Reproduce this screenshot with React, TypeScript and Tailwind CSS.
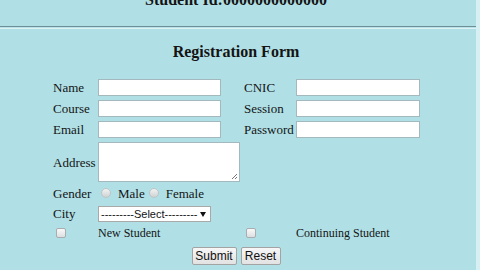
import React from "react";

const serif = { fontFamily: '"Liberation Serif", "Times New Roman", serif' };
const sans = { fontFamily: '"Liberation Sans", Arial, sans-serif' };

function TextBox({ w = "w-[123px]" }: { w?: string }) {
  return <div className={`${w} h-[17px] bg-white border border-[#a3b9be]`} />;
}

function Radio() {
  return (
    <span className="inline-block w-[10px] h-[10px] rounded-full border border-[#bfc5c7] bg-gradient-to-b from-[#f2f2f2] to-[#cfd3d4]" />
  );
}

function Check() {
  return (
    <span className="inline-block w-[10px] h-[10px] rounded-[2px] border border-[#a9adb0] bg-gradient-to-b from-[#fafafa] to-[#dcdedf]" />
  );
}

function Btn({ label, w }: { label: string; w: string }) {
  return (
    <button
      className={`${w} h-[18px] rounded-[2px] border border-[#a3a3a3] bg-gradient-to-b from-[#f7f7f7] to-[#e2e2e2] text-[12px] leading-[16px] text-[#111]`}
      style={sans}
    >
      {label}
    </button>
  );
}

export default function App() {
  return (
    <div className="w-[480px] h-[270px] overflow-hidden bg-[#b0e0e6] flex text-[#141414]" style={serif}>
      <div className="w-[476px] flex flex-col">
        <div className="pr-[4px] -mt-[10px] text-center text-[16px] leading-[20px] font-bold">
          Student Id:0000000000000
        </div>
        <div className="mt-[16px] h-px bg-[#6f8f98]" />
        <div className="h-px bg-[#b8e2e7]" />
        <div className="h-px bg-[#dcf2f4]" />
        <div className="pr-[4px] mt-[13px] text-center text-[16px] leading-[20px] font-bold">
          Registration Form
        </div>

        <div className="mt-[15px] ml-[53px] flex flex-col text-[13px] leading-[15px]">
          {[
            ["Name", "CNIC"],
            ["Course", "Session"],
            ["Email", "Password"],
          ].map(([a, b]) => (
            <div key={a} className="h-[21px] flex items-center">
              <span className="w-[45px]">{a}</span>
              <div className="w-[146px]">
                <TextBox />
              </div>
              <span className="w-[52px]">{b}</span>
              <TextBox w="w-[124px]" />
            </div>
          ))}

          <div className="h-[44px] flex items-center">
            <span className="w-[45px]">Address</span>
            <div className="relative w-[142px] h-[40px] bg-white border border-[#a3b9be]">
              <svg className="absolute right-[1px] bottom-[1px]" width="7" height="7" viewBox="0 0 7 7">
                <path d="M6 1 L1 6 M6 4 L4 6" stroke="#777" strokeWidth="1" />
              </svg>
            </div>
          </div>

          <div className="h-[18px] flex items-center">
            <span className="w-[45px]">Gender</span>
            <span className="ml-[3px] flex items-center">
              <Radio />
              <span className="ml-[7px]">Male</span>
              <span className="ml-[4px] flex">
                <Radio />
              </span>
              <span className="ml-[7px]">Female</span>
            </span>
          </div>

          <div className="h-[23px] flex items-center">
            <span className="w-[45px]">City</span>
            <div className="relative w-[113px] h-[16px] bg-white border border-[#a9a9a9] flex items-center pl-[2px] text-[11px] leading-[14px]" style={sans}>
              ---------Select---------
              <svg className="absolute right-[4px] top-[5px]" width="6" height="5" viewBox="0 0 6 5">
                <path d="M0 0 H6 L3 5 Z" fill="#111" />
              </svg>
            </div>
          </div>

          <div className="h-[16px] flex items-center text-[12px]">
            <span className="w-[45px] flex">
              <span className="ml-[3px] flex">
                <Check />
              </span>
            </span>
            <span className="w-[146px]">New Student</span>
            <span className="w-[52px] flex">
              <span className="ml-[2px] flex">
                <Check />
              </span>
            </span>
            <span>Continuing Student</span>
          </div>
        </div>

        <div className="pr-[4px] mt-[6px] flex justify-center gap-[4px]">
          <Btn label="Submit" w="w-[45px]" />
          <Btn label="Reset" w="w-[40px]" />
        </div>
      </div>
      <div className="flex-1 bg-[#d6eff2]" />
    </div>
  );
}
